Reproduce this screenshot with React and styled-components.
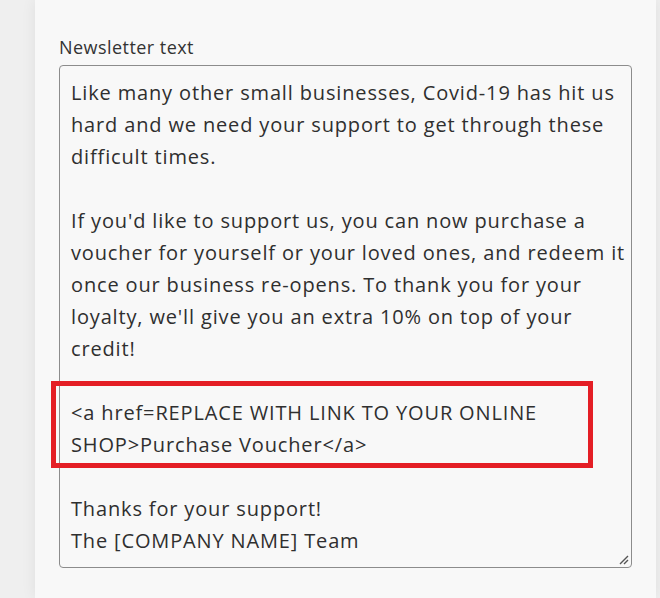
import React from 'react';
import styled, { createGlobalStyle } from 'styled-components';

const paragraphs = [
  ['Like many other small businesses, Covid-19 has hit us', 'hard and we need your support to get through these', 'difficult times.'],
  [
    "If you'd like to support us, you can now purchase a",
    'voucher for yourself or your loved ones, and redeem it',
    'once our business re-opens. To thank you for your',
    "loyalty, we'll give you an extra 10% on top of your",
    'credit!',
  ],
  ['<a href=REPLACE WITH LINK TO YOUR ONLINE', 'SHOP>Purchase Voucher</a>'],
  ['Thanks for your support!', 'The [COMPANY NAME] Team'],
];

export default function App() {
  return (
    <>
      <GlobalStyle />
      <Page>
        <Panel>
          <Label>Newsletter text</Label>
          <Field>
            {paragraphs.map((lines, i) => (
              <Paragraph key={i}>
                {lines.map((l) => (
                  <Line key={l}>{l}</Line>
                ))}
              </Paragraph>
            ))}
            <Highlight />
            <Grip width="10" height="10" viewBox="0 0 10 10">
              <path d="M1 9 L9 1 M5 9 L9 5" stroke="#555" strokeWidth="1.4" />
            </Grip>
          </Field>
        </Panel>
      </Page>
    </>
  );
}

const GlobalStyle = createGlobalStyle`
  body {
    margin: 0;
    background: #efefef;
    font-family: "Open Sans", "Noto Sans", sans-serif;
  }
`;

const Page = styled.div`
  display: flex;
  height: 598px;
  padding: 0 4px 0 35px;
  overflow: hidden;
`;

const Panel = styled.div`
  flex: 1;
  background: #f8f8f8;
  box-shadow: 0 0 14px rgba(0, 0, 0, 0.07);
  padding: 36px 0 0 24px;
`;

const Label = styled.div`
  font-size: 18px;
  letter-spacing: 0.45px;
  color: #333;
  line-height: 23px;
  margin: 0 0 6px 0;
`;

const Field = styled.div`
  position: relative;
  box-sizing: border-box;
  width: 573px;
  height: 503px;
  border: 1px solid #8c8c8c;
  border-radius: 4px;
  padding: 11px 11px;
  font-size: 20px;
  letter-spacing: 0.85px;
  line-height: 32px;
  color: #2f2f2f;
`;

const Paragraph = styled.div`
  & + & {
    margin-top: 32px;
  }
`;

const Line = styled.div`
  white-space: nowrap;
`;

const Highlight = styled.div`
  position: absolute;
  left: -9px;
  top: 315px;
  width: 542px;
  height: 87px;
  box-sizing: border-box;
  border: 5px solid #e41e25;
`;

const Grip = styled.svg`
  position: absolute;
  right: 2px;
  bottom: 2px;
`;
